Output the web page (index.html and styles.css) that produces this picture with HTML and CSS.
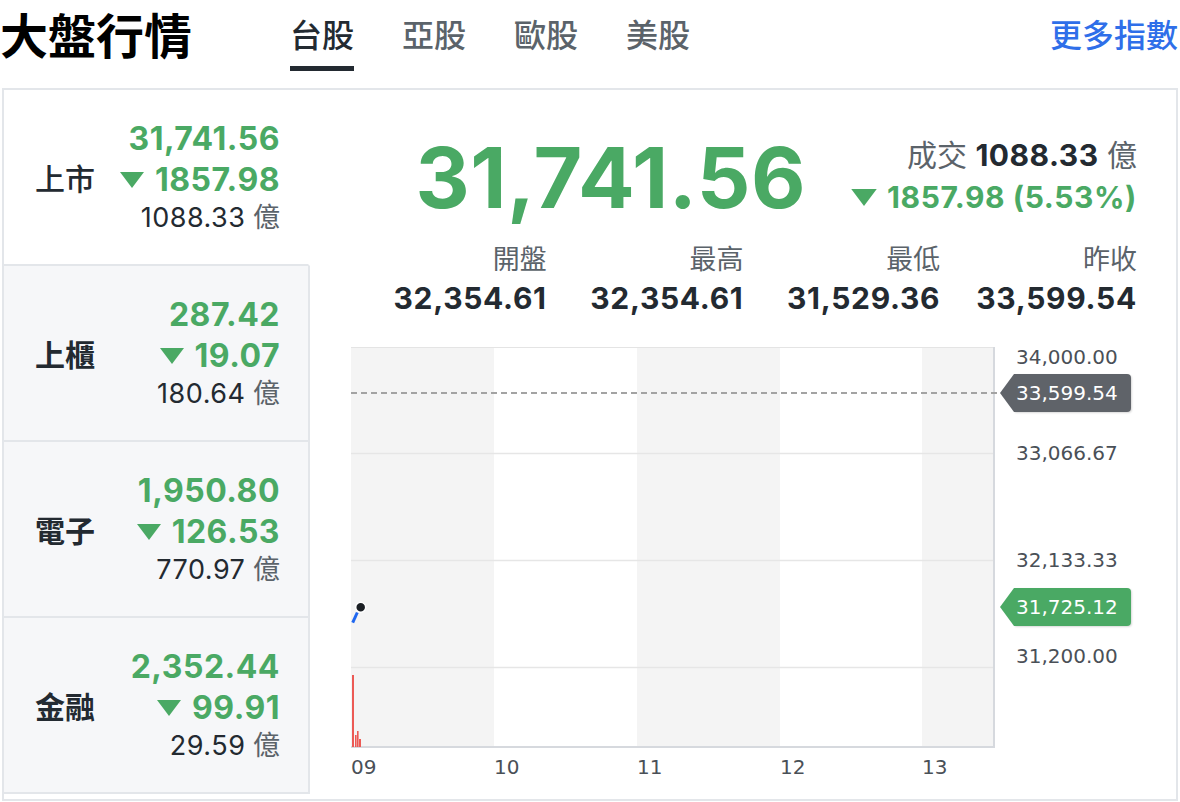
FILE: index.html
```html
<!DOCTYPE html>
<html lang="zh-Hant">
<head>
<meta charset="utf-8">
<title>大盤行情</title>
<link rel="stylesheet" href="styles.css">
</head>
<body>
<header class="top">
  <h1 class="title">大盤行情</h1>
  <nav class="tabs">
    <a class="tab active">台股</a>
    <a class="tab">亞股</a>
    <a class="tab">歐股</a>
    <a class="tab">美股</a>
  </nav>
  <a class="more">更多指數</a>
</header>
<section class="board">
  <ul class="markets">
    <li class="market selected">
      <span class="m-name">上市</span>
      <div class="m-vals">
        <div class="m-price">31,741.56</div>
        <div class="m-chg"><svg class="tri" viewBox="0 0 24 16"><path d="M0 0H24L12 16Z"/></svg>1857.98</div>
        <div class="m-vol"><span class="num">1088.33</span> <span class="unit">億</span></div>
      </div>
    </li>
    <li class="market">
      <span class="m-name">上櫃</span>
      <div class="m-vals">
        <div class="m-price">287.42</div>
        <div class="m-chg"><svg class="tri" viewBox="0 0 24 16"><path d="M0 0H24L12 16Z"/></svg>19.07</div>
        <div class="m-vol"><span class="num">180.64</span> <span class="unit">億</span></div>
      </div>
    </li>
    <li class="market">
      <span class="m-name">電子</span>
      <div class="m-vals">
        <div class="m-price">1,950.80</div>
        <div class="m-chg"><svg class="tri" viewBox="0 0 24 16"><path d="M0 0H24L12 16Z"/></svg>126.53</div>
        <div class="m-vol"><span class="num">770.97</span> <span class="unit">億</span></div>
      </div>
    </li>
    <li class="market">
      <span class="m-name">金融</span>
      <div class="m-vals">
        <div class="m-price">2,352.44</div>
        <div class="m-chg"><svg class="tri" viewBox="0 0 24 16"><path d="M0 0H24L12 16Z"/></svg>99.91</div>
        <div class="m-vol"><span class="num">29.59</span> <span class="unit">億</span></div>
      </div>
    </li>
  </ul>
  <div class="detail">
    <div class="quote">
      <div class="big">31,741.56</div>
      <div class="qside">
        <div class="turnover"><span class="lbl">成交</span> <b>1088.33</b> <span class="lbl">億</span></div>
        <div class="qchg"><svg class="tri big-tri" viewBox="0 0 24 16"><path d="M0 0H24L12 16Z"/></svg>1857.98 (5.53%)</div>
      </div>
    </div>
    <div class="stats">
      <div class="stat"><div class="s-lbl">開盤</div><div class="s-val">32,354.61</div></div>
      <div class="stat"><div class="s-lbl">最高</div><div class="s-val">32,354.61</div></div>
      <div class="stat"><div class="s-lbl">最低</div><div class="s-val">31,529.36</div></div>
      <div class="stat"><div class="s-lbl">昨收</div><div class="s-val">33,599.54</div></div>
    </div>
    <div class="chart">
      <svg class="plot" width="650" height="402" viewBox="0 0 650 402">
        <rect x="0" y="0" width="143" height="400" fill="#f4f4f4"/>
        <rect x="286" y="0" width="143" height="400" fill="#f4f4f4"/>
        <rect x="571" y="0" width="71" height="400" fill="#f4f4f4"/>
        <line x1="0" y1="0.5" x2="642" y2="0.5" stroke="#e4e4e4" stroke-width="1"/>
        <line x1="0" y1="106.5" x2="642" y2="106.5" stroke="#e6e6e6" stroke-width="1.5"/>
        <line x1="0" y1="213.5" x2="642" y2="213.5" stroke="#e6e6e6" stroke-width="1.5"/>
        <line x1="0" y1="320.5" x2="642" y2="320.5" stroke="#e6e6e6" stroke-width="1.5"/>
        <line x1="0" y1="400" x2="644" y2="400" stroke="#d6d9de" stroke-width="2"/>
        <line x1="643" y1="0" x2="643" y2="401" stroke="#d6d9de" stroke-width="2"/>
        <line x1="0" y1="46" x2="650" y2="46" stroke="#a3a3a3" stroke-width="2" stroke-dasharray="6 4"/>
        <rect x="1" y="328" width="2" height="72" fill="#ec5a55"/>
        <rect x="4" y="388" width="1.6" height="12" fill="#ec5a55"/>
        <rect x="6" y="384" width="1.6" height="16" fill="#ec5a55"/>
        <rect x="8" y="392" width="2" height="8" fill="#ec5a55"/>
        <line x1="1.7" y1="275.7" x2="6.3" y2="265.5" stroke="#1f67f0" stroke-width="3"/>
        <circle cx="9.7" cy="260.3" r="5" fill="#1b1f24" stroke="#fff" stroke-width="1.5"/>
      </svg>
      <span class="ylab" style="top:0px">34,000.00</span>
      <span class="ylab" style="top:96px">33,066.67</span>
      <span class="ylab" style="top:203px">32,133.33</span>
      <span class="ylab" style="top:299px">31,200.00</span>
      <span class="tag tag-prev" style="top:27px">33,599.54</span>
      <span class="tag tag-now" style="top:241px">31,725.12</span>
      <span class="xlab" style="left:1px">09</span>
      <span class="xlab" style="left:144px">10</span>
      <span class="xlab" style="left:287px">11</span>
      <span class="xlab" style="left:430px">12</span>
      <span class="xlab" style="left:572px">13</span>
    </div>
  </div>
</section>
</body>
</html>
```
FILE: styles.css
```css
* { box-sizing: border-box; }
body {
  margin: 0;
  width: 1180px;
  background: #fff;
  color: #232a31;
  font-family: Inter, "Noto Sans CJK TC", sans-serif;
}
.top {
  display: flex;
  align-items: flex-start;
  height: 88px;
}
.title {
  margin: 0;
  width: 192px;
  font-family: "Noto Sans CJK TC", sans-serif;
  font-size: 48px;
  font-weight: 700;
  line-height: 66px;
  color: #000;
}
.tabs {
  display: flex;
  gap: 48px;
  margin-left: 98px;
}
.tab {
  display: block;
  font-family: "Noto Sans CJK TC", sans-serif;
  font-size: 32px;
  font-weight: 500;
  line-height: 66px;
  color: #5b636a;
  text-decoration: none;
  box-sizing: content-box;
  height: 66px;
}
.tab.active {
  color: #232a31;
  border-bottom: 5px solid #232a31;
}
.more {
  margin-left: auto;
  margin-right: 2px;
  font-family: "Noto Sans CJK TC", sans-serif;
  font-size: 32px;
  font-weight: 500;
  line-height: 66px;
  color: #2f6fe9;
}
.board {
  display: flex;
  margin: 0 2px;
  height: 713px;
  border: 2px solid #e3e6ea;
}
.markets {
  list-style: none;
  margin: 0;
  padding: 0;
  width: 306px;
  flex: none;
}
.market {
  height: 176px;
  display: flex;
  align-items: center;
  justify-content: space-between;
  padding: 0 28px 0 31px;
  background: #f6f7f9;
  border-right: 2px solid #e3e6ea;
  border-bottom: 2px solid #e3e6ea;
}
.market.selected {
  background: #fff;
  border-right-color: transparent;
}
.m-name {
  font-family: "Noto Sans CJK TC", sans-serif;
  font-size: 30px;
  font-weight: 700;
  color: #232a31;
}
.market.selected .m-name { font-weight: 500; }
.m-vals { text-align: right; }
.m-price {
  font-size: 32px;
  font-weight: 700;
  line-height: 41px;
  letter-spacing: 0.5px;
  color: #4aa964;
}
.m-chg {
  display: flex;
  justify-content: flex-end;
  align-items: center;
  gap: 11px;
  font-size: 32px;
  font-weight: 700;
  line-height: 41px;
  letter-spacing: 0.5px;
  color: #4aa964;
}
.tri {
  width: 24px;
  height: 16px;
  fill: currentColor;
}
.big-tri { width: 26px; height: 17px; }
.m-vol {
  font-size: 27px;
  line-height: 36px;
  color: #232a31;
}
.m-vol .num { letter-spacing: 0.5px; }
.unit, .lbl {
  color: #5b636a;
  font-weight: 400;
}
.detail {
  flex: 1;
  padding: 0 39px 0 40px;
}
.quote {
  display: flex;
  justify-content: flex-end;
  align-items: flex-start;
  gap: 45px;
  padding-top: 40px;
}
.big {
  font-size: 84px;
  font-weight: 700;
  line-height: 96px;
  letter-spacing: 0.5px;
  color: #4aa964;
}
.qside {
  margin-top: 4px;
  text-align: right;
}
.turnover {
  font-size: 30px;
  line-height: 42px;
}
.turnover b { font-weight: 700; color: #232a31; letter-spacing: 0.5px; }
.qchg {
  display: flex;
  justify-content: flex-end;
  align-items: center;
  gap: 10px;
  font-size: 30px;
  font-weight: 700;
  line-height: 42px;
  letter-spacing: 0.6px;
  color: #4aa964;
}
.stats {
  display: grid;
  grid-template-columns: repeat(4, 1fr);
  margin-top: 16px;
  text-align: right;
}
.s-lbl {
  font-size: 27px;
  line-height: 36px;
  color: #5b636a;
}
.s-val {
  font-size: 30px;
  font-weight: 700;
  line-height: 40px;
  letter-spacing: 0.7px;
  color: #232a31;
}
.chart {
  position: relative;
  height: 440px;
  margin-top: 29px;
}
.plot {
  position: absolute;
  left: 1px;
  top: 0;
}
.ylab, .xlab {
  position: absolute;
  font-family: "DejaVu Sans", sans-serif;
  font-size: 20px;
  line-height: 20px;
  color: #4a5057;
  white-space: nowrap;
}
.ylab { left: 666px; }
.xlab { top: 410px; }
.tag {
  position: absolute;
  left: 664px;
  width: 117px;
  height: 38px;
  padding-left: 2px;
  font-family: "DejaVu Sans", sans-serif;
  font-size: 20px;
  line-height: 38px;
  color: #fff;
  border-radius: 0 4px 4px 0;
  white-space: nowrap;
  box-shadow: 1px 1px 2px rgba(0,0,0,0.15);
}
.tag::before {
  content: "";
  position: absolute;
  left: -14px;
  top: 0;
  border-top: 19px solid transparent;
  border-bottom: 19px solid transparent;
  border-right: 14px solid;
}
.tag-prev { background: #5f6369; }
.tag-prev::before { border-right-color: #5f6369; }
.tag-now { background: #4aa964; }
.tag-now::before { border-right-color: #4aa964; }
```
